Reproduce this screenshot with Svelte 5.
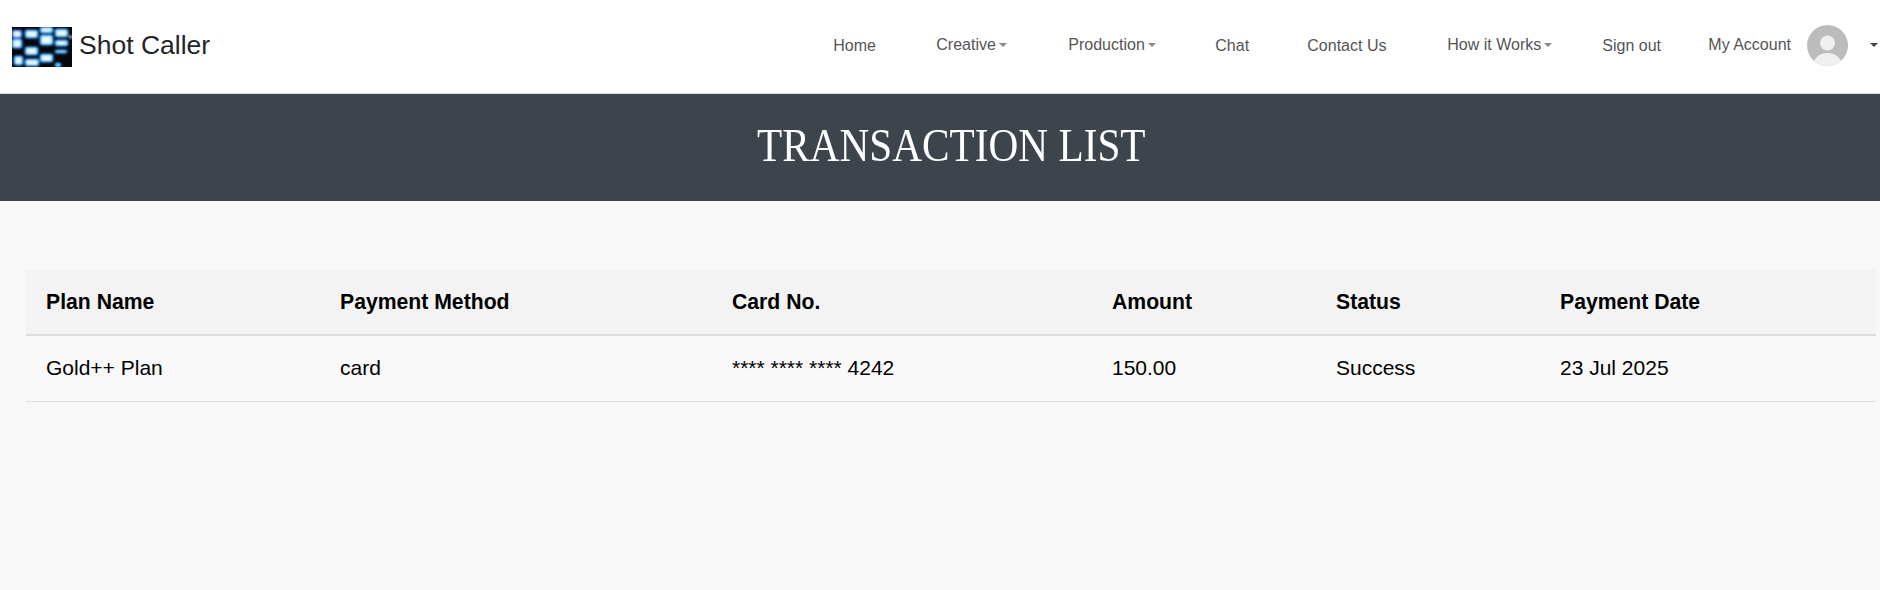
<script>
  const navItems = [
    { label: 'Home', width: 103 },
    { label: 'Creative', caret: true, width: 132 },
    { label: 'Production', caret: true, width: 147 },
    { label: 'Chat', width: 92 },
    { label: 'Contact Us', width: 140 },
    { label: 'How it Works', caret: true, width: 155 },
    { label: 'Sign out', width: 106 },
  ];

  const columns = [
    { title: 'Plan Name', width: 294, value: 'Gold++ Plan' },
    { title: 'Payment Method', width: 392, value: 'card' },
    { title: 'Card No.', width: 380, value: '**** **** **** 4242' },
    { title: 'Amount', width: 224, value: '150.00' },
    { title: 'Status', width: 224, value: 'Success' },
    { title: 'Payment Date', width: 336, value: '23 Jul 2025' },
  ];

  const lights = [
    [0, 3, 10, 8, '#0a5fe8'], [0, 12, 10, 9], [13, 3, 13, 8], [28, 0, 13, 6], [28, 8, 13, 10],
    [43, 2, 13, 8], [43, 13, 13, 6], [13, 20, 13, 8], [2, 29, 9, 9], [13, 32, 14, 7],
    [28, 27, 13, 8], [43, 23, 12, 3], [43, 36, 6, 4],
  ];
</script>

<style>
  :global(body) {
    margin: 0;
    background: #f8f8f8;
    font-family: "Liberation Sans", Arial, sans-serif;
  }

  .navbar {
    display: flex;
    align-items: center;
    justify-content: space-between;
    height: 94px;
    background: #fff;
    border-bottom: 1px solid #ddd;
    box-sizing: border-box;
    padding: 0 2px 0 12px;
  }

  .brand {
    display: flex;
    align-items: center;
    gap: 7px;
    font-size: 26.5px;
    color: #212529;
  }

  .brand span {
    margin-bottom: 2px;
  }

  .logo {
    display: block;
    width: 60px;
    height: 40px;
  }

  .nav {
    display: flex;
    align-items: center;
    margin-bottom: 3px;
  }

  .nav-link {
    display: flex;
    align-items: center;
    font-size: 16px;
    color: #555;
    padding-top: 2px;
  }

  .nav-link.has-caret {
    padding-top: 0;
  }

  .caret {
    display: inline-block;
    margin-left: 3px;
    border-top: 4px solid #888;
    border-left: 4px solid transparent;
    border-right: 4px solid transparent;
  }

  .account {
    display: flex;
    align-items: center;
    font-size: 16px;
    color: #555;
  }

  .avatar {
    display: block;
    width: 41px;
    height: 41px;
    margin: 0 19px 0 16px;
  }

  .account .caret {
    border-top-color: #444;
  }

  .banner {
    display: flex;
    align-items: center;
    justify-content: center;
    height: 107px;
    padding: 0 0 5px 22px;
    box-sizing: border-box;
    background: #3d444c;
    color: #fff;
    font-family: "Liberation Serif", "Times New Roman", serif;
    font-size: 47px;
    font-weight: 400;
    margin: 0;
  }

  .banner span {
    display: inline-block;
    transform: scaleX(0.878);
  }

  .content {
    padding: 69px 4px 0 26px;
    min-height: 389px;
    box-sizing: border-box;
  }

  table {
    width: 1850px;
    border-collapse: collapse;
    table-layout: fixed;
    font-size: 21px;
    color: #000;
  }

  th {
    height: 64px;
    padding: 0 20px;
    text-align: left;
    background: #f3f3f3;
    border-bottom: 2px solid #ddd;
    font-size: 21.2px;
    font-weight: 700;
  }

  td {
    height: 66px;
    padding: 0 20px 1px;
    box-sizing: border-box;
    background: #f9f9f9;
    border-bottom: 1px solid #ddd;
  }
</style>

<header class="navbar">
  <div class="brand">
    <svg class="logo" viewBox="0 0 60 40" aria-hidden="true">
      <defs>
        <filter id="glow" x="-30%" y="-30%" width="160%" height="160%">
          <feGaussianBlur stdDeviation="1" />
        </filter>
      </defs>
      <rect width="60" height="40" fill="#06070f" />
      <g filter="url(#glow)">
        {#each lights as [x, y, w, h, edge]}
          <rect x={x - 0.5} y={y - 0.5} width={w + 1} height={h + 1} rx="3" fill={edge ?? '#22a4ff'} />
          <rect x={x + 1.5} y={y + 1.2} width={Math.max(w - 3, 1)} height={Math.max(h - 2.4, 1)} rx="1" fill="#e8fbff" />
        {/each}
        <circle cx="58.5" cy="10" r="1.4" fill="#f0f0f0" />
      </g>
    </svg>
    <span>Shot Caller</span>
  </div>

  <nav class="nav">
    {#each navItems as item}
      <div class="nav-link" class:has-caret={item.caret} style="width: {item.width}px">
        {item.label}
        {#if item.caret}<span class="caret"></span>{/if}
      </div>
    {/each}
    <div class="account">
      My Account
      <svg class="avatar" viewBox="0 0 41 41" aria-hidden="true">
        <defs>
          <clipPath id="avatar-clip"><circle cx="20.5" cy="20.5" r="20.5" /></clipPath>
        </defs>
        <circle cx="20.5" cy="20.5" r="20.5" fill="#bcbcbc" />
        <g clip-path="url(#avatar-clip)">
          <circle cx="20.5" cy="18" r="7.5" fill="#f0f0f0" />
          <ellipse cx="20.5" cy="42" rx="15" ry="14" fill="#f0f0f0" />
        </g>
      </svg>
      <span class="caret"></span>
    </div>
  </nav>
</header>

<h1 class="banner"><span>TRANSACTION LIST</span></h1>

<main class="content">
  <table>
    <colgroup>
      {#each columns as col}
        <col style="width: {col.width}px" />
      {/each}
    </colgroup>
    <thead>
      <tr>
        {#each columns as col}
          <th>{col.title}</th>
        {/each}
      </tr>
    </thead>
    <tbody>
      <tr>
        {#each columns as col}
          <td>{col.value}</td>
        {/each}
      </tr>
    </tbody>
  </table>
</main>
